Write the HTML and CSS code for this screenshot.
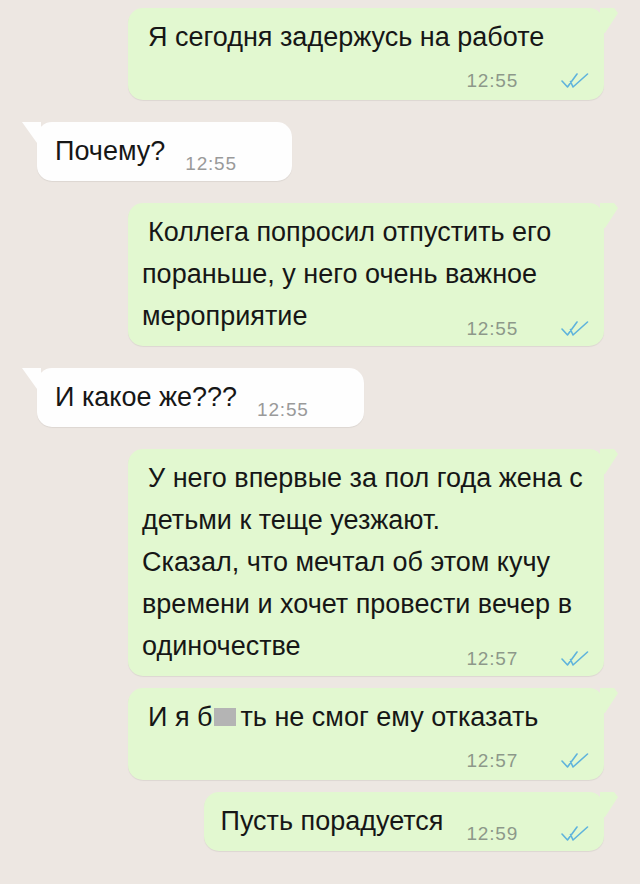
FILE: index.html
```html
<!DOCTYPE html>
<html lang="ru">
<head>
    <meta charset="UTF-8">
    <meta name="viewport" content="width=device-width, initial-scale=1.0">
    <title>Чат</title>
    <link rel="stylesheet" href="styles.css">
</head>
<body>
    <div class="chat">
        <div class="msg out">
            <p class="text">Я сегодня задержусь на работе</p>
            <div class="foot">
                <span class="meta"><span class="time">12:55</span><svg class="ticks" viewBox="0 0 28 16"><path d="M1 8 L6.5 14 L16 1 M9.5 8.5 L12 14 L26.5 1"/></svg></span>
            </div>
        </div>

        <div class="msg in">
            <div class="last">
                <span class="line">Почему?</span>
                <span class="meta"><span class="time">12:55</span></span>
            </div>
        </div>

        <div class="msg out">
            <p class="text">Коллега попросил отпустить его<br>пораньше, у него очень важное</p>
            <div class="last">
                <span class="line">мероприятие</span>
                <span class="meta"><span class="time">12:55</span><svg class="ticks" viewBox="0 0 28 16"><path d="M1 8 L6.5 14 L16 1 M9.5 8.5 L12 14 L26.5 1"/></svg></span>
            </div>
        </div>

        <div class="msg in">
            <div class="last">
                <span class="line">И какое же???</span>
                <span class="meta"><span class="time">12:55</span></span>
            </div>
        </div>

        <div class="msg out">
            <p class="text">У него впервые за пол года жена с<br>детьми к теще уезжают.<br>Сказал, что мечтал об этом кучу<br>времени и хочет провести вечер в</p>
            <div class="last">
                <span class="line">одиночестве</span>
                <span class="meta"><span class="time">12:57</span><svg class="ticks" viewBox="0 0 28 16"><path d="M1 8 L6.5 14 L16 1 M9.5 8.5 L12 14 L26.5 1"/></svg></span>
            </div>
        </div>

        <div class="msg out cont">
            <p class="text">И я б<span class="censor"></span>ть не смог ему отказать</p>
            <div class="foot">
                <span class="meta"><span class="time">12:57</span><svg class="ticks" viewBox="0 0 28 16"><path d="M1 8 L6.5 14 L16 1 M9.5 8.5 L12 14 L26.5 1"/></svg></span>
            </div>
        </div>

        <div class="msg out cont short">
            <div class="last">
                <span class="line">Пусть порадуется</span>
                <span class="meta"><span class="time">12:59</span><svg class="ticks" viewBox="0 0 28 16"><path d="M1 8 L6.5 14 L16 1 M9.5 8.5 L12 14 L26.5 1"/></svg></span>
            </div>
        </div>
    </div>
</body>
</html>
```

FILE: styles.css
```css
* {
    margin: 0;
    padding: 0;
    box-sizing: border-box;
}

body {
    font-family: "Liberation Sans", Arial, sans-serif;
    background: #ede7e2;
    height: 884px;
    overflow: hidden;
}

.chat {
    display: flex;
    flex-direction: column;
    padding: 8px 36px 0 37px;
}

.msg {
    position: relative;
    margin-top: 22px;
    padding: 8px 15px 9px 14px;
    border-radius: 15px;
    font-size: 27px;
    line-height: 42px;
    color: #161616;
    box-shadow: 0 1px 1px rgba(0, 0, 0, 0.07);
}

.msg:first-child {
    margin-top: 0;
}

.msg.cont {
    margin-top: 12px;
}

.out {
    align-self: flex-end;
    width: 476px;
    background: #e2f8d0;
}

.out.short {
    width: auto;
    padding-left: 16px;
}

.in {
    align-self: flex-start;
    background: #fefefe;
    padding-left: 18px;
    padding-right: 55px;
}

.in .last {
    gap: 20px;
}

/* хвостики пузырей */
.out::after {
    content: "";
    position: absolute;
    top: 0;
    right: -15px;
    width: 19px;
    height: 26px;
    background: #e2f8d0;
    clip-path: polygon(0 0, 14px 0, 18px 5px, 5px 25px, 0 25px);
}

.in::before {
    content: "";
    position: absolute;
    top: 0;
    left: -15px;
    width: 19px;
    height: 22px;
    background: #fefefe;
    clip-path: polygon(0 0, 100% 0, 100% 100%, 15px 21px);
}

.text {
    white-space: nowrap;
    text-indent: 6px;
}

.line {
    white-space: nowrap;
}

.last {
    display: flex;
    justify-content: space-between;
    align-items: flex-end;
    gap: 23px;
}

.last .meta {
    margin-bottom: -2px;
}

.foot {
    display: flex;
    justify-content: flex-end;
    margin-top: 13px;
}

.meta {
    display: flex;
    align-items: center;
    line-height: 20px;
}

.time {
    font-size: 19px;
    letter-spacing: 0.8px;
    color: #8d988a;
}

.in .time {
    color: #9a9a9a;
}

.ticks {
    width: 28px;
    height: 16px;
    margin-left: 43px;
    fill: none;
    stroke: #5fb3dc;
    stroke-width: 1.6;
    stroke-linecap: round;
    stroke-linejoin: round;
}

.censor {
    display: inline-block;
    width: 22px;
    height: 18px;
    margin: 0 5px 0 1px;
    background: #b4b4b4;
}
```
